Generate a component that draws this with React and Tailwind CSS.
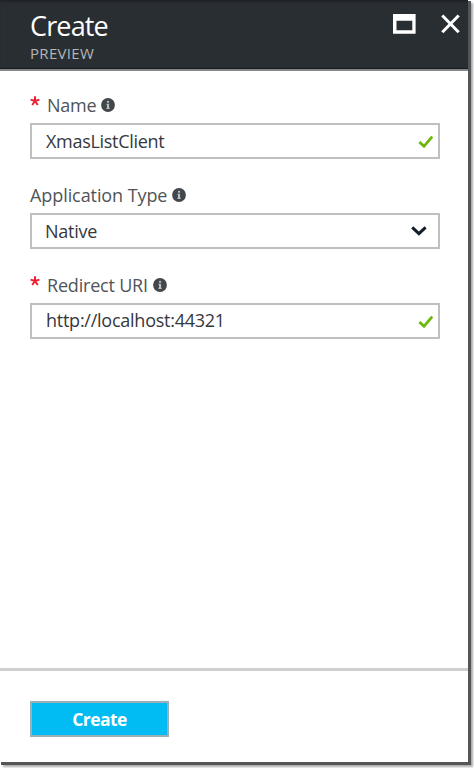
function Info() {
  return (
    <svg className="ml-[5px] h-[14px] w-[14px] shrink-0" viewBox="0 0 14 14">
      <circle cx="7" cy="7" r="6.9" fill="#42474b" />
      <rect x="6" y="2.9" width="2.1" height="1.8" fill="#b9bdc0" />
      <path d="M5.5 5.8h2.6v4h.6v1.1H5.4V9.8H6V6.9h-.5z" fill="#b9bdc0" />
    </svg>
  );
}

function Check() {
  return (
    <svg className="mt-[1px] h-[14px] w-[16px]" viewBox="0 0 16 14">
      <path d="M1.4 6.9 6 11.3 14.2 1.7" fill="none" stroke="#6cb80a" strokeWidth="2.8" />
    </svg>
  );
}

function Chevron() {
  return (
    <svg className="h-[10px] w-[16px]" viewBox="0 0 16 10">
      <path d="M1.2 1.4 7.9 7.6 14.6 1.4" fill="none" stroke="#151e28" strokeWidth="3" />
    </svg>
  );
}

function Field({ label, labelClass, required, value, valueClass, padClass, children }) {
  return (
    <div className="mb-[18px] h-[72px]">
      <div className="flex h-[36px] items-center">
        {required && (
          <svg className="mr-[7px] mb-[8px] h-[10px] w-[10px]" viewBox="0 0 10 10">
            <path d="M5 5V.2M5 5 .6 3.7M5 5 9.4 3.7M5 5 2.2 9M5 5 7.8 9" fill="none" stroke="#ee1c2e" strokeWidth="1.9" />
          </svg>
        )}
        <span className={`whitespace-nowrap text-[18px] text-[#505458] ${labelClass}`}>{label}</span>
        <Info />
      </div>
      <div className={`flex h-[36px] items-center justify-between border-2 border-[#c0c0c0] text-[#34383c] ${padClass}`}>
        <span className={`whitespace-nowrap text-[18px] ${valueClass}`}>{value}</span>
        {children}
      </div>
    </div>
  );
}

export default function App() {
  return (
    <div className="h-[768px] w-[474px] overflow-hidden bg-white font-['Open_Sans','Noto_Sans',sans-serif]">
      <div className="flex h-[762px] w-[468px] flex-col bg-white shadow-[2px_2px_0_1px_#555555,4px_4px_2px_1px_#aaaaaa]">
        <header className="flex h-[71px] shrink-0 justify-between border-b-2 border-[#85888a] bg-[#292e32] pl-[30px] pr-[8px] shadow-[inset_0_-1px_0_#171b1e,inset_0_2px_1px_#202427]">
          <div>
            <h1 className="mt-[7px] h-[36px] whitespace-nowrap text-[27px] leading-[38px] tracking-[-0.85px] text-white">Create</h1>
            <p className="whitespace-nowrap text-[15px] font-medium leading-[20px] tracking-[0.3px] text-[#b4b6b8]">PREVIEW</p>
          </div>
          <div className="flex gap-[25px] pt-[14px]">
            <svg className="h-[20px] w-[23px]" viewBox="0 0 23 20">
              <path fillRule="evenodd" d="M0 0h22.6v19.8H0zM3.5 6.8v9.4h15.8V6.8z" fill="white" />
            </svg>
            <svg className="h-[20px] w-[19px]" viewBox="0 0 19 20">
              <path d="M1.3 1.5 17.7 18.3M17.7 1.5 1.3 18.3" fill="none" stroke="white" strokeWidth="3" />
            </svg>
          </div>
        </header>
        <main className="flex-1 pl-[30px] pr-[28px] pt-[16px]">
          <Field label="Name" required labelClass="tracking-[-0.25px]" value="XmasListClient" valueClass="tracking-[-0.3px]" padClass="pl-[14px] pr-[4px]">
            <Check />
          </Field>
          <Field label="Application Type" labelClass="tracking-[-0.08px]" value="Native" valueClass="tracking-[-0.25px]" padClass="pl-[13px] pr-[11px]">
            <Chevron />
          </Field>
          <Field label="Redirect URI" required labelClass="tracking-[-0.2px]" value="http://localhost:44321" valueClass="pb-[1px] tracking-[-0.25px]" padClass="pl-[14px] pr-[4px]">
            <Check />
          </Field>
        </main>
        <footer className="h-[94px] shrink-0 border-t-[3px] border-[#d0d0d0] pl-[30px] pt-[30px]">
          <button className="h-[36px] w-[139px] border-2 border-[#9bb0b6] bg-[#00bcf2] text-[17.5px] font-bold leading-[32px] tracking-[-0.55px] text-white">Create</button>
        </footer>
      </div>
    </div>
  );
}
